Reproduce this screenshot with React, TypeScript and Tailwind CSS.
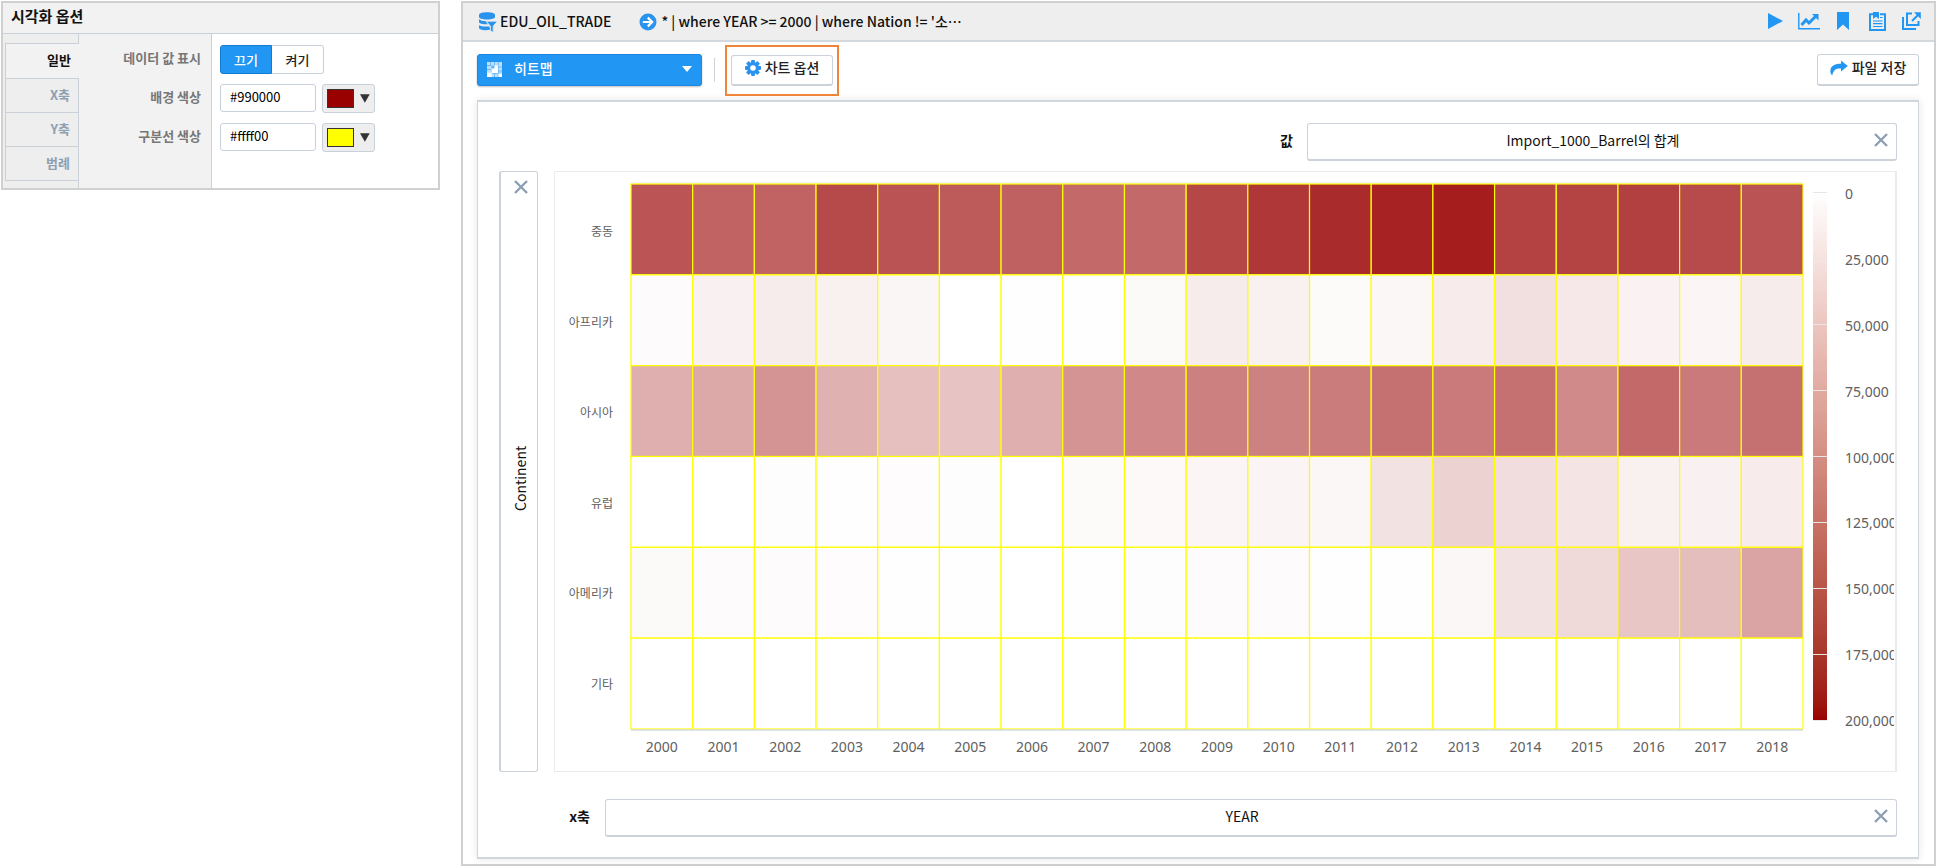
import { useState } from "react";
import type { ReactNode } from "react";

const YEARS = Array.from({ length: 19 }, (_, i) => 2000 + i);

const SERIES: { name: string; values: number[] }[] = [
  { name: "중동", values: [133, 122, 122, 143, 135, 129, 124, 118, 118, 144, 157, 166, 173, 177, 148, 147, 150, 142, 135] },
  { name: "아프리카", values: [3, 11, 15, 12, 7, 0, 0.5, 1, 5, 15, 12, 4, 6, 16, 25, 18, 10, 8, 15] },
  { name: "아시아", values: [63, 68, 84, 61, 50, 47, 63, 84, 93, 100, 98, 103, 111, 104, 111, 92, 118, 104, 111] },
  { name: "유럽", values: [0, 0, 1.5, 1, 2, 1.5, 0, 4, 4.5, 8, 9, 6, 23, 35, 27, 21, 12, 11, 16] },
  { name: "아메리카", values: [5, 3.5, 3, 2.5, 0.5, 0.5, 0, 0.5, 1.5, 3.5, 3, 0.5, 1, 6, 23, 30, 45, 52, 71] },
  { name: "기타", values: Array.from({ length: 19 }, () => 0) },
];

const LEGEND = ["0", "25,000", "50,000", "75,000", "100,000", "125,000", "150,000", "175,000", "200,000"];

/* Linear blend from white (0) to #990000 (200 thousand). */
function heat(value: number) {
  const t = Math.min(1, value / 200);
  const gb = Math.round(255 - 255 * t);
  return `rgb(${Math.round(255 - 102 * t)},${gb},${gb})`;
}

function DatasetIcon() {
  return (
    <svg viewBox="0 0 18 20" className="h-5 w-[18px] shrink-0" fill="#2a93ee" aria-hidden="true">
      <path d="M0 2.800C0 1.200 3.500.3 8 .3s8 .9 8 2.500v2C16 6.600 12.500 7.500 8 7.500S0 6.600 0 4.800Z" />
      <path d="M0 7.200C1.500 8.500 4 9 6.500 9l2.500 3.300C5 12.500 0 12 0 9.800Z" />
      <path d="M0 13.200c2.500 1.300 6 1.500 9.500 1.100l1.500 1.500v2C6 18.800 0 18 0 15.800Z" />
      <path d="M7.300 9.200H18.500l-4.300 5v6.300l-2.800-2V14.200Z" stroke="#eee" strokeWidth=".8" />
    </svg>
  );
}

function ArrowCircleIcon() {
  return (
    <svg viewBox="0 0 18 18" className="size-[18px] shrink-0" aria-hidden="true">
      <circle cx="9" cy="9" r="8.500" fill="#2a93ee" />
      <path d="M3.800 9h9M8.800 4.600 13.200 9l-4.400 4.400" fill="none" stroke="#fff" strokeWidth="2.200" />
    </svg>
  );
}

function CloseIcon() {
  return (
    <svg viewBox="0 0 14 14" className="size-3.5" aria-hidden="true">
      <path d="M1 1l12 12M13 1l-12 12" fill="none" stroke="#8c9fb4" strokeWidth="2.400" />
    </svg>
  );
}

function HeatmapIcon() {
  return (
    <svg viewBox="0 0 15 15" className="size-[15px]" aria-hidden="true">
      <path d="M0 0h15v15H0Z" fill="#fff" opacity=".7" />
      <path d="M0 3.500h4M0 7.500h4M0 11h4M3.700 0v3.500M7.500 0v3.500M11.200 0v15M11.200 5H15M11.200 9H15M5 11.200h10M7.500 11.200V15" stroke="#2196f3" strokeWidth=".5" />
      <path d="M5 3.500h6v7.500H5ZM0 10.500h4.500V15H0Z" fill="#fff" />
      <path d="M4.500 3.500h3v3h-3Z" fill="#2196f3" opacity=".7" />
      <path d="M11.500 11.500H15V15h-3.500Z" fill="#fff" />
    </svg>
  );
}

function GearIcon() {
  return (
    <svg viewBox="-8 -8 16 16" className="size-4" aria-hidden="true">
      <g fill="#2a93ee">
        {[0, 45, 90, 135].map((a) => (
          <rect key={a} x="-1.900" y="-8" width="3.800" height="16" rx=".8" transform={`rotate(${a})`} />
        ))}
        <circle r="6" />
      </g>
      <circle r="2.800" fill="#fff" />
    </svg>
  );
}

function ShareIcon() {
  return (
    <svg viewBox="0 0 18 16" className="h-4 w-[18px]" fill="#2196f3" aria-hidden="true">
      <path d="M11 .5 17.800 6 11 11.500V8.500C6.500 8 3.500 9.500 2.200 15.500.8 14 0 12 .5 9.500 1.500 5.500 5.500 3.800 11 3.800Z" />
    </svg>
  );
}

function HeaderButton({ label, children }: { label: string; children: ReactNode }) {
  return (
    <button type="button" aria-label={label} className="flex h-6 w-6 items-center justify-center text-[#2196f3]">
      {children}
    </button>
  );
}

function HeaderActions() {
  return (
    <div className="flex items-center gap-2.5 pb-px">
      <HeaderButton label="실행">
        <svg viewBox="0 0 15 16" className="h-4 w-[15px]" fill="currentColor"><path d="M0 0 15 8 0 16Z" /></svg>
      </HeaderButton>
      <HeaderButton label="차트">
        <svg viewBox="0 0 22 18" className="h-[18px] w-[22px] shrink-0" fill="none" stroke="currentColor">
          <path d="M.8 1v15.700H22" strokeWidth="1.400" />
          <path d="M3.500 13 8 8l3 3 6.500-6.500" strokeWidth="3" />
          <path d="M14 2H20.500V8.500Z" fill="currentColor" stroke="none" />
        </svg>
      </HeaderButton>
      <HeaderButton label="북마크">
        <svg viewBox="0 0 12 18" className="h-[18px] w-3" fill="currentColor"><path d="M0 0h12v18l-6-5.500L0 18Z" /></svg>
      </HeaderButton>
      <HeaderButton label="보고서">
        <svg viewBox="0 0 17 19" className="h-[19px] w-[17px]" fill="none" stroke="currentColor">
          <path d="M4 2.200H1V18h15V2.200h-5" strokeWidth="2" />
          <path d="M4 0h6v7L7 4.800 4 7Z" fill="currentColor" stroke="none" />
          <path d="M11 5.500h2.500M4 9h9.500M4 11.700h9.500M4 14.500h9.500" strokeWidth="1.200" />
        </svg>
      </HeaderButton>
      <HeaderButton label="새 창">
        <svg viewBox="0 0 19 18" className="h-[18px] w-[19px]" fill="none" stroke="currentColor" strokeWidth="2">
          <path d="M1 5v12H14" />
          <path d="M10 1.500H5V13h11.500V9" />
          <path d="m10 9 6-6" />
          <path d="M12 .2h6.800V7Z" fill="currentColor" stroke="none" />
        </svg>
      </HeaderButton>
    </div>
  );
}

const TABS = ["일반", "X축", "Y축", "범례"];

function ColorButton({ label, swatch }: { label: string; swatch: string }) {
  return (
    <button type="button" aria-label={label} className="flex h-[29px] w-[53px] items-center gap-1.5 rounded-[3px] border border-[#c8d0d9] bg-[#eee] px-1">
      <span className={`h-[19px] w-7 border border-[#333] ${swatch}`} />
      <svg viewBox="0 0 10 9" className="h-[9px] w-2.5" fill="#333" aria-hidden="true"><path d="M0 0h10L5 9Z" /></svg>
    </button>
  );
}

function OptionsPanel() {
  const [tab, setTab] = useState("일반");
  const [show, setShow] = useState(false);
  const [bg, setBg] = useState("#990000");
  const [line, setLine] = useState("#ffff00");
  const labelClass = "flex h-[29px] items-center justify-end pb-0.5 text-[13px] font-bold text-[#777]";
  const inputClass = "h-7 w-24 rounded-[3px] border border-[#c8d0d9] bg-white px-[9px] pb-1 text-[13px] text-black";

  return (
    <aside className="w-[439px] shrink-0 border-2 border-[#cfd0d0] bg-[#f2f2f2]">
      <h2 className="flex h-[31px] items-center border-b border-[#c9d0d7] px-2 pb-1 text-[15px] font-bold text-[#111]">시각화 옵션</h2>
      <div className="flex h-[154px]">
        <div role="tablist" aria-orientation="vertical" className="flex w-[76px] flex-col bg-[#eee] pl-[2px]">
          <div className="h-[9px] border-r border-[#c9d0d7]" />
          {TABS.map((t, i) => (
            <button
              key={t}
              type="button"
              role="tab"
              aria-selected={tab === t}
              onClick={() => setTab(t)}
              className={`flex items-center justify-end border-t border-l border-[#c9d0d7] pb-0.5 text-[13px] font-bold ${i === 0 ? "h-[35px]" : "h-[34px]"} ${
                tab === t ? "bg-[#f2f2f2] pr-2 text-[#111]" : "border-r pr-2 text-[#8ea0b0]"
              }`}
            >
              {t}
            </button>
          ))}
          <div className="flex-1 border-t border-r border-[#c9d0d7]" />
        </div>
        <div className="flex w-[133px] flex-col gap-2.5 border-r border-[#c9d0d7] pt-2.5 pr-2.5">
          <span id="show-label" className={labelClass}>데이터 값 표시</span>
          <label htmlFor="bg-color" className={labelClass}>배경 색상</label>
          <label htmlFor="line-color" className={labelClass}>구분선 색상</label>
        </div>
        <div className="flex flex-1 flex-col gap-2.5 bg-white pt-[11px] pl-2">
          <div role="group" aria-labelledby="show-label" className="flex h-[29px] text-[13px] font-medium">
            <button type="button" aria-pressed={!show} onClick={() => setShow(false)} className="w-[52px] rounded-l-[3px] border border-[#1479d0] bg-[#2196f3] text-white">끄기</button>
            <button type="button" aria-pressed={show} onClick={() => setShow(true)} className="w-[52px] rounded-r-[3px] border border-l-0 border-[#c8d0d9] bg-white text-[#222]">켜기</button>
          </div>
          <div className="flex h-[29px] gap-1.5">
            <input id="bg-color" value={bg} onChange={(e) => setBg(e.target.value)} className={inputClass} />
            <ColorButton label="배경 색상 선택" swatch="bg-[#990000]" />
          </div>
          <div className="flex h-[29px] gap-1.5">
            <input id="line-color" value={line} onChange={(e) => setLine(e.target.value)} className={inputClass} />
            <ColorButton label="구분선 색상 선택" swatch="bg-[#ffff00]" />
          </div>
        </div>
      </div>
    </aside>
  );
}

function FieldBox({ text, className }: { text: string; className: string }) {
  return (
    <div className={`flex h-[38px] items-center rounded-[3px] border border-b-2 border-[#cbd2d9] bg-white pr-2 pb-1 ${className}`}>
      <span className="flex-1 pl-1 text-center text-[14px] leading-5 text-[#111]">{text}</span>
      <button type="button" aria-label={`${text} 제거`}><CloseIcon /></button>
    </div>
  );
}

function Heatmap() {
  return (
    <div className="flex flex-1 items-start overflow-hidden border border-r-2 border-[#e8ecf1] pt-3 text-[#606060]">
      <div className="grid h-[545px] w-[76px] shrink-0 grid-rows-6 items-center pt-0.5 pr-[18px] text-right text-[12px]">
        {SERIES.map((s) => <span key={s.name}>{s.name}</span>)}
      </div>
      <div className="min-w-0 flex-1">
        <svg className="block h-[545px] w-full overflow-visible" role="img" aria-label="대륙별 연도별 원유 수입량 히트맵">
          <line x1="0" x2="100%" y1="-1" y2="-1" stroke="#e2e6ea" />
          {SERIES.map((s, r) =>
            s.values.map((v, c) => (
              <rect
                key={`${r}-${c}`}
                x={`${(c * 100) / 19}%`}
                y={`${(r * 100) / 6}%`}
                width={`${100 / 19}%`}
                height={`${100 / 6}%`}
                fill={heat(v)}
                stroke="#ffff00"
                strokeWidth="1.200"
              />
            ))
          )}
          <line x1="0" x2="100%" y1="546" y2="546" stroke="#d5dade" strokeWidth="1.500" />
        </svg>
        <div className="grid grid-cols-19 pt-2.5 text-center font-['Noto_Sans',sans-serif] text-[14px] leading-4">
          {YEARS.map((y) => <span key={y}>{y}</span>)}
        </div>
      </div>
      <div className="mt-2 ml-2.5 flex h-[529px] w-3.5 shrink-0 flex-col justify-between bg-linear-to-b from-white to-[#990000]">
        {LEGEND.map((l) => <span key={l} className="h-px bg-[#e6e6e6]" />)}
      </div>
      <div className="mr-px ml-[18px] flex h-[547px] w-[49px] shrink-0 flex-col justify-between overflow-hidden font-['Noto_Sans',sans-serif] text-[14px] leading-5">
        {LEGEND.map((l) => <span key={l}>{l}</span>)}
      </div>
    </div>
  );
}

export default function App() {
  return (
    <div className="flex items-start gap-[21px] bg-white p-px pb-0 font-['Noto_Sans_CJK_KR',sans-serif]">
      <OptionsPanel />
      <main className="min-w-0 flex-1 border-2 border-[#cfd0d0] bg-white">
        <header className="flex h-[39px] items-center justify-between border-b-2 border-[#d3d8dd] bg-[#eee] pr-[11px] pl-4">
          <div className="flex items-center text-[14px] font-medium text-[#111]">
            <DatasetIcon />
            <span className="ml-[3px] pb-px">EDU_OIL_TRADE</span>
            <span className="ml-7 flex items-center gap-1">
              <ArrowCircleIcon />
              <span className="pb-px">* | where YEAR &gt;= 2000 | where Nation != '소⋯</span>
            </span>
          </div>
          <HeaderActions />
        </header>

        <div className="flex h-[58px] items-center justify-between pr-[15px] pb-0.5 pl-3.5">
          <div className="flex items-center">
            <div className="relative w-[225px]">
              <select aria-label="차트 유형" className="h-8 w-full appearance-none rounded-[3px] border border-[#1b87e0] bg-[#2196f3] pb-1 pl-9 text-[14px] font-medium text-white shadow-[0_1px_2px_rgba(0,0,0,0.25)]">
                <option>히트맵</option>
              </select>
              <span className="pointer-events-none absolute top-2 left-2.5"><HeatmapIcon /></span>
              <svg viewBox="0 0 10 6" className="pointer-events-none absolute top-3 right-2.5 h-1.5 w-2.5" fill="#fff" aria-hidden="true"><path d="M0 0h10L5 6Z" /></svg>
            </div>
            <div className="mr-2.5 ml-3 h-6 w-px bg-[#cdd3d9]" />
            <div className="border-2 border-[#f08439] px-1 py-2">
              <button type="button" className="flex h-[31px] w-[102px] items-center justify-center gap-1 rounded-[3px] border border-b-2 border-[#ccd2d9] bg-white pb-1 text-[14px] font-medium text-[#222]">
                <GearIcon />
                차트 옵션
              </button>
            </div>
          </div>
          <button type="button" className="flex h-8 w-[102px] items-center justify-center gap-1 rounded-[3px] border border-b-2 border-[#ccd2d9] bg-white pb-1 text-[14px] font-medium text-[#222]">
            <ShareIcon />
            파일 저장
          </button>
        </div>

        <section className="mr-[15px] mb-[5px] ml-3.5 border border-t-2 border-b-2 border-[#cfd6dc] px-[21px] pt-[21px] pb-5 shadow-[0_0_8px_rgba(0,0,0,0.1)]">
          <div className="flex items-center justify-end gap-3.5">
            <span className="pb-1 text-[14px] font-bold text-[#111]">값</span>
            <FieldBox text="Import_1000_Barrel의 합계" className="w-[590px]" />
          </div>
          <div className="mt-2.5 flex h-[601px] gap-4">
            <div className="flex w-[39px] flex-col items-center rounded-[3px] border border-l-2 border-[#cbd2d9] pt-2 pb-2 pl-[3px]">
              <button type="button" aria-label="Continent 제거"><CloseIcon /></button>
              <span className="flex flex-1 rotate-180 items-center justify-center text-[14px] text-[#111] [writing-mode:vertical-rl]">Continent</span>
            </div>
            <Heatmap />
          </div>
          <div className="mt-[27px] flex items-center gap-[15px]">
            <span className="w-[91px] pb-1 text-right text-[14px] font-bold text-[#111]">x축</span>
            <FieldBox text="YEAR" className="flex-1" />
          </div>
        </section>
      </main>
    </div>
  );
}
